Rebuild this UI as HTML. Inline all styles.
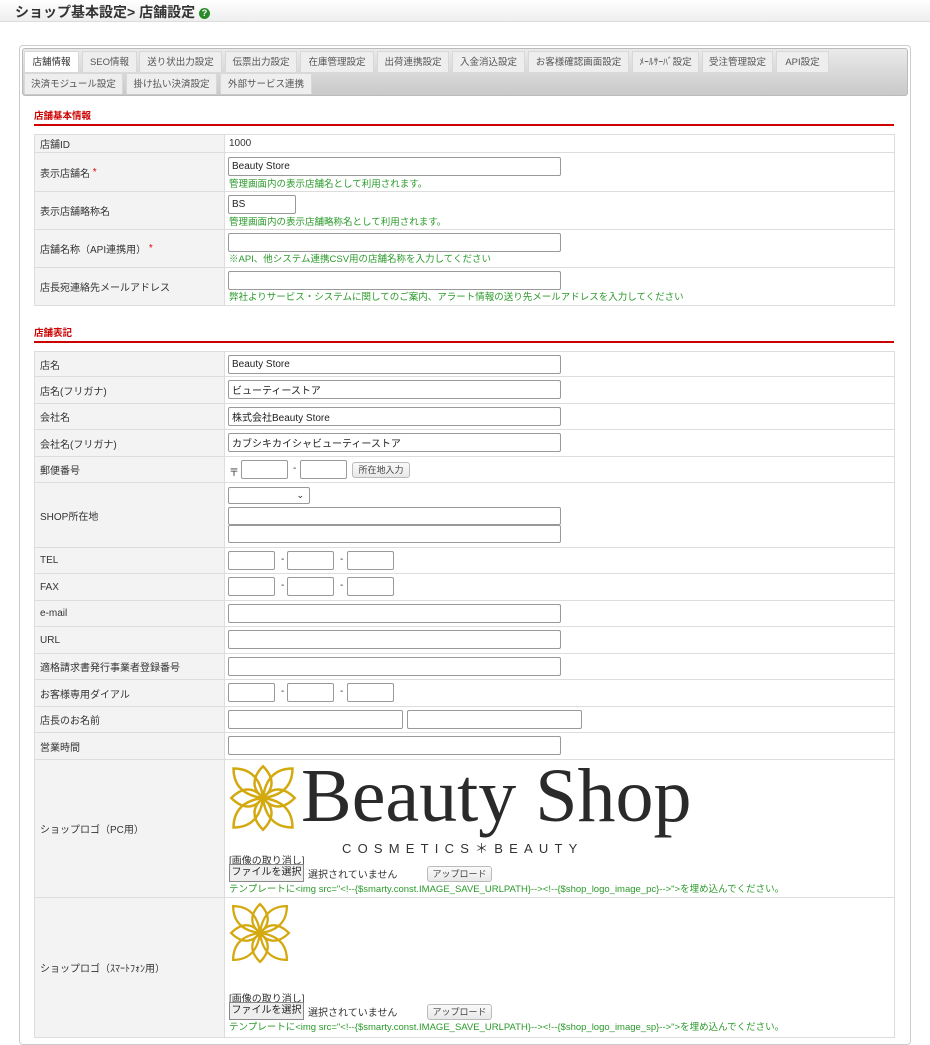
<!DOCTYPE html>
<html><head><meta charset="utf-8">
<style>
*{box-sizing:border-box;margin:0;padding:0}
body{width:930px;height:1024px;overflow:hidden;background:#fff;font-family:"Liberation Sans","Noto Sans CJK JP",sans-serif;font-size:10px;color:#333;position:relative}
.a{position:absolute}
.hdr{left:0;top:0;width:930px;height:22px;background:linear-gradient(#fff,#eee);border-bottom:1px solid #ddd}
.hdr span{position:absolute;left:15px;top:2px;font-size:14px;font-weight:bold;color:#333}
.box{left:19px;top:45px;width:892px;height:1000px;border:1px solid #ccc;border-radius:4px}
.tabbar{left:22px;top:48px;width:886px;height:48px;background:linear-gradient(#eaeaea,#c9c9c9);border:1px solid #bbb;border-radius:3px}
.tab{position:absolute;height:21px;background:#eee;border:1px solid #d8d8d8;border-bottom:none;text-align:center;line-height:21px;font-size:9.5px;color:#555}
.tab.on{background:#fff;color:#333}
.st{left:34px;font-size:9.5px;font-weight:bold;color:#c00}
.rl{left:34px;width:860px;height:2px;background:#c00}
.row{position:absolute;left:34px;width:861px;border:1px solid #ddd;border-top:none}
.lab{position:absolute;left:0;top:0;bottom:0;width:190px;background:#f3f3f3;border-right:1px solid #ddd;padding-left:5px;display:flex;align-items:center}
.in{position:absolute;height:19px;border:1px solid #999;border-radius:2px;background:#fff;font-size:10px;padding-left:3px;display:flex;align-items:center;color:#222}
.g{position:absolute;color:#2a9a2a;font-size:9.5px;white-space:nowrap}
.t{position:absolute;white-space:nowrap}
.btn{position:absolute;height:16px;border:1px solid #bbb;border-radius:3px;background:linear-gradient(#fafafa,#e8e8e8);font-size:9px;text-align:center;line-height:14px;color:#444}
.fb{position:absolute;height:18px;width:75px;border:1px solid #888;background:#eee;font-size:10px;line-height:16px;text-align:center;color:#222}
.req{color:#e00}
</style></head><body>
<div class="a hdr"><span>ショップ基本設定&gt; 店舗設定 <span style="position:static;display:inline-block;width:11px;height:11px;border-radius:50%;background:#2a8a2a;color:#fff;font-size:9px;line-height:11px;text-align:center;vertical-align:1px">?</span></span></div>
<div class="a box"></div>
<div class="a tabbar"></div>
<div class="tab on" style="left:24px;top:51px;width:55px">店舗情報</div>
<div class="tab" style="left:82px;top:51px;width:55px">SEO情報</div>
<div class="tab" style="left:139px;top:51px;width:83px">送り状出力設定</div>
<div class="tab" style="left:225px;top:51px;width:72px">伝票出力設定</div>
<div class="tab" style="left:300px;top:51px;width:74px">在庫管理設定</div>
<div class="tab" style="left:377px;top:51px;width:72px">出荷連携設定</div>
<div class="tab" style="left:452px;top:51px;width:73px">入金消込設定</div>
<div class="tab" style="left:528px;top:51px;width:101px">お客様確認画面設定</div>
<div class="tab" style="left:632px;top:51px;width:67px">ﾒｰﾙｻｰﾊﾞ設定</div>
<div class="tab" style="left:702px;top:51px;width:71px">受注管理設定</div>
<div class="tab" style="left:776px;top:51px;width:53px">API設定</div>
<div class="tab" style="left:24px;top:73px;width:99px">決済モジュール設定</div>
<div class="tab" style="left:126px;top:73px;width:91px">掛け払い決済設定</div>
<div class="tab" style="left:220px;top:73px;width:92px">外部サービス連携</div>

<div class="a st" style="top:108px">店舗基本情報</div>
<div class="a rl" style="top:124px"></div>
<div class="row" style="top:134px;height:19px;border-top:1px solid #ddd"><div class="lab">店舗ID</div><div class="t" style="left:194px;top:3px">1000</div></div>
<div class="row" style="top:153px;height:39px"><div class="lab">表示店舗名 <span class="req">&nbsp;*</span></div><div class="in" style="left:193px;top:4px;width:333px">Beauty Store</div><div class="g" style="left:194px;top:23px">管理画面内の表示店舗名として利用されます。</div></div>
<div class="row" style="top:192px;height:38px"><div class="lab">表示店舗略称名</div><div class="in" style="left:193px;top:3px;width:68px">BS</div><div class="g" style="left:194px;top:22px">管理画面内の表示店舗略称名として利用されます。</div></div>
<div class="row" style="top:230px;height:38px"><div class="lab">店舗名称（API連携用）<span class="req">&nbsp;*</span></div><div class="in" style="left:193px;top:3px;width:333px"></div><div class="g" style="left:194px;top:21px">※API、他システム連携CSV用の店舗名称を入力してください</div></div>
<div class="row" style="top:268px;height:38px"><div class="lab">店長宛連絡先メールアドレス</div><div class="in" style="left:193px;top:3px;width:333px"></div><div class="g" style="left:194px;top:21px">弊社よりサービス・システムに関してのご案内、アラート情報の送り先メールアドレスを入力してください</div></div>

<div class="a st" style="top:325px">店舗表記</div>
<div class="a rl" style="top:341px"></div>
<div class="row" style="top:351px;height:26px;border-top:1px solid #ddd"><div class="lab">店名</div><div class="in" style="left:193px;top:3px;width:333px">Beauty Store</div></div>
<div class="row" style="top:377px;height:27px"><div class="lab">店名(フリガナ)</div><div class="in" style="left:193px;top:3px;width:333px">ビューティーストア</div></div>
<div class="row" style="top:404px;height:26px"><div class="lab">会社名</div><div class="in" style="left:193px;top:3px;width:333px">株式会社Beauty Store</div></div>
<div class="row" style="top:430px;height:27px"><div class="lab">会社名(フリガナ)</div><div class="in" style="left:193px;top:3px;width:333px">カブシキカイシャビューティーストア</div></div>
<div class="row" style="top:457px;height:26px"><div class="lab">郵便番号</div><div class="t" style="left:194px;top:7px">〒</div><div class="in" style="left:206px;top:3px;width:47px"></div><div class="t" style="left:258px;top:6px">-</div><div class="in" style="left:265px;top:3px;width:47px"></div><div class="btn" style="left:317px;top:5px;width:58px">所在地入力</div></div>
<div class="row" style="top:483px;height:65px"><div class="lab">SHOP所在地</div><div class="in" style="left:193px;top:4px;width:82px;height:17px;justify-content:flex-end;padding-right:5px;font-size:9px">⌄</div><div class="in" style="left:193px;top:24px;width:333px;height:18px"></div><div class="in" style="left:193px;top:42px;width:333px;height:18px"></div></div>
<div class="row" style="top:548px;height:26px"><div class="lab">TEL</div><div class="in" style="left:193px;top:3px;width:47px"></div><div class="t" style="left:246px;top:6px">-</div><div class="in" style="left:252px;top:3px;width:47px"></div><div class="t" style="left:305px;top:6px">-</div><div class="in" style="left:312px;top:3px;width:47px"></div></div>
<div class="row" style="top:574px;height:27px"><div class="lab">FAX</div><div class="in" style="left:193px;top:3px;width:47px"></div><div class="t" style="left:246px;top:6px">-</div><div class="in" style="left:252px;top:3px;width:47px"></div><div class="t" style="left:305px;top:6px">-</div><div class="in" style="left:312px;top:3px;width:47px"></div></div>
<div class="row" style="top:601px;height:26px"><div class="lab">e-mail</div><div class="in" style="left:193px;top:3px;width:333px"></div></div>
<div class="row" style="top:627px;height:27px"><div class="lab">URL</div><div class="in" style="left:193px;top:3px;width:333px"></div></div>
<div class="row" style="top:654px;height:26px"><div class="lab">適格請求書発行事業者登録番号</div><div class="in" style="left:193px;top:3px;width:333px"></div></div>
<div class="row" style="top:680px;height:27px"><div class="lab">お客様専用ダイアル</div><div class="in" style="left:193px;top:3px;width:47px"></div><div class="t" style="left:246px;top:6px">-</div><div class="in" style="left:252px;top:3px;width:47px"></div><div class="t" style="left:305px;top:6px">-</div><div class="in" style="left:312px;top:3px;width:47px"></div></div>
<div class="row" style="top:707px;height:26px"><div class="lab">店長のお名前</div><div class="in" style="left:193px;top:3px;width:175px"></div><div class="in" style="left:372px;top:3px;width:175px"></div></div>
<div class="row" style="top:733px;height:27px"><div class="lab">営業時間</div><div class="in" style="left:193px;top:3px;width:333px"></div></div>
<div class="row" style="top:760px;height:138px"><div class="lab">ショップロゴ（PC用）</div>
<svg class="a" style="left:194px;top:4px" width="68" height="68" viewBox="0 0 60 60" fill="none" stroke="#d4a90f" stroke-width="2.2">
<path d="M30 2C20 12 20 22 30 30C40 22 40 12 30 2Z"/><path d="M30 58C20 48 20 38 30 30C40 38 40 48 30 58Z"/><path d="M2 30C12 20 22 20 30 30C22 40 12 40 2 30Z"/><path d="M58 30C48 20 38 20 30 30C38 40 48 40 58 30Z"/>
<path d="M4 4C4 20 14 28 30 30C28 14 20 4 4 4Z"/><path d="M56 4C56 20 46 28 30 30C32 14 40 4 56 4Z"/><path d="M4 56C4 40 14 32 30 30C28 46 20 56 4 56Z"/><path d="M56 56C56 40 46 32 30 30C32 46 40 56 56 56Z"/></svg>
<div class="t" style="left:266px;top:-7px;font-family:'Liberation Serif',serif;font-size:76px;color:#2a2a2a;letter-spacing:0px">Beauty Shop</div>
<div class="t" style="left:307px;top:78px;font-size:13px;letter-spacing:6.2px;color:#333">COSMETICS＊BEAUTY</div>
<div class="t" style="left:194px;top:92px">[画像の取り消し]</div>
<div class="fb" style="left:194px;top:104px">ファイルを選択</div><div class="t" style="left:273px;top:106px">選択されていません</div>
<div class="btn" style="left:392px;top:106px;width:65px">アップロード</div>
<div class="g" style="left:194px;top:121px">テンプレートに&lt;img src="&lt;!--{$smarty.const.IMAGE_SAVE_URLPATH}--&gt;&lt;!--{$shop_logo_image_pc}--&gt;"&gt;を埋め込んでください。</div></div>
<div class="row" style="top:898px;height:140px"><div class="lab">ショップロゴ（ｽﾏｰﾄﾌｫﾝ用）</div>
<svg class="a" style="left:194px;top:4px" width="62" height="62" viewBox="0 0 60 60" fill="none" stroke="#d4a90f" stroke-width="2.2">
<path d="M30 2C20 12 20 22 30 30C40 22 40 12 30 2Z"/><path d="M30 58C20 48 20 38 30 30C40 38 40 48 30 58Z"/><path d="M2 30C12 20 22 20 30 30C22 40 12 40 2 30Z"/><path d="M58 30C48 20 38 20 30 30C38 40 48 40 58 30Z"/>
<path d="M4 4C4 20 14 28 30 30C28 14 20 4 4 4Z"/><path d="M56 4C56 20 46 28 30 30C32 14 40 4 56 4Z"/><path d="M4 56C4 40 14 32 30 30C28 46 20 56 4 56Z"/><path d="M56 56C56 40 46 32 30 30C32 46 40 56 56 56Z"/></svg>
<div class="t" style="left:194px;top:92px">[画像の取り消し]</div>
<div class="fb" style="left:194px;top:104px">ファイルを選択</div><div class="t" style="left:273px;top:106px">選択されていません</div>
<div class="btn" style="left:392px;top:106px;width:65px">アップロード</div>
<div class="g" style="left:194px;top:121px">テンプレートに&lt;img src="&lt;!--{$smarty.const.IMAGE_SAVE_URLPATH}--&gt;&lt;!--{$shop_logo_image_sp}--&gt;"&gt;を埋め込んでください。</div></div>
</body></html>
